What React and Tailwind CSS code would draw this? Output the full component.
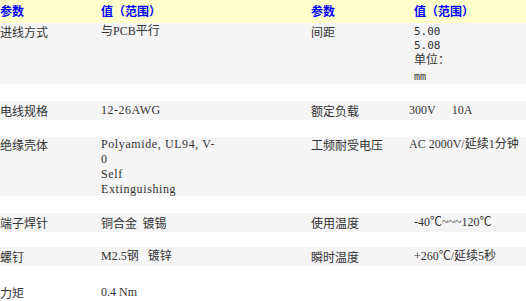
import React from "react";

const cn = "font-['Noto_Sans_CJK_SC',sans-serif]";
const serif = "font-['Liberation_Serif','Noto_Sans_CJK_SC',serif]";
const mono = "font-['DejaVu_Sans_Mono','Noto_Sans_CJK_SC',monospace]";

function Row({ h, gray = true, top = false, pt = "", children }) {
  return (
    <div
      className={`grid grid-cols-[101px_210px_103px_1fr] ${h} ${gray ? "bg-[#f5f5f5]" : "bg-white"} ${
        top ? "items-start" : "items-center"
      } ${pt} overflow-hidden`}
    >
      {children}
    </div>
  );
}

function Gap({ h }) {
  return <div className={h}></div>;
}

export default function App() {
  return (
    <div className={`w-[526px] h-[301px] overflow-hidden bg-white text-[12px] leading-[15px] text-[#333] ${cn}`}>
      <div className="grid grid-cols-[101px_210px_103px_1fr] h-[23px] bg-[#ffffcc] pt-[3px] text-[#0000ff] font-bold">
        <div>参数</div>
        <div>值（范围）</div>
        <div>参数</div>
        <div>值（范围）</div>
      </div>

      <Row h="h-[61px]" top pt="pt-[1px]">
        <div>进线方式</div>
        <div className={serif}>与PCB平行</div>
        <div>间距</div>
        <div className={`${mono} text-[11px]`}>
          <div className="h-[14px]">5.00</div>
          <div className="h-[15px]">5.08</div>
          <div className="h-[16px] text-[12px]">单位：</div>
          <div className="text-[10px]">mm</div>
        </div>
      </Row>
      <Gap h="h-[17px]" />

      <Row h="h-[19px]">
        <div>电线规格</div>
        <div className={`${serif} tracking-[0.5px]`}>12-26AWG</div>
        <div>额定负载</div>
        <div className={`${serif} -ml-[5px]`}>
          300V<span className="inline-block w-[16px]"></span>10A
        </div>
      </Row>
      <Gap h="h-[17px]" />

      <Row h="h-[59px]" top>
        <div>绝缘壳体</div>
        <div className={`${serif} tracking-[0.6px]`}>
          <div>Polyamide, UL94, V-</div>
          <div>0</div>
          <div>Self</div>
          <div>Extinguishing</div>
        </div>
        <div>工频耐受电压</div>
        <div className={`${serif} -ml-[5px] whitespace-nowrap`}>AC 2000V/延续1分钟</div>
      </Row>
      <Gap h="h-[17px]" />

      <Row h="h-[19px]">
        <div>端子焊针</div>
        <div>铜合金&nbsp; 镀锡</div>
        <div>使用温度</div>
        <div className={serif}>-40℃~~~120℃</div>
      </Row>
      <Gap h="h-[15px]" />

      <Row h="h-[19px]">
        <div>螺钉</div>
        <div className={serif}>M2.5钢&nbsp;&nbsp; 镀锌</div>
        <div>瞬时温度</div>
        <div className={serif}>+260℃/延续5秒</div>
      </Row>
      <Gap h="h-[17px]" />

      <Row h="h-[19px]" gray={false}>
        <div>力矩</div>
        <div className={serif}>0.4 Nm</div>
        <div></div>
        <div></div>
      </Row>
    </div>
  );
}
